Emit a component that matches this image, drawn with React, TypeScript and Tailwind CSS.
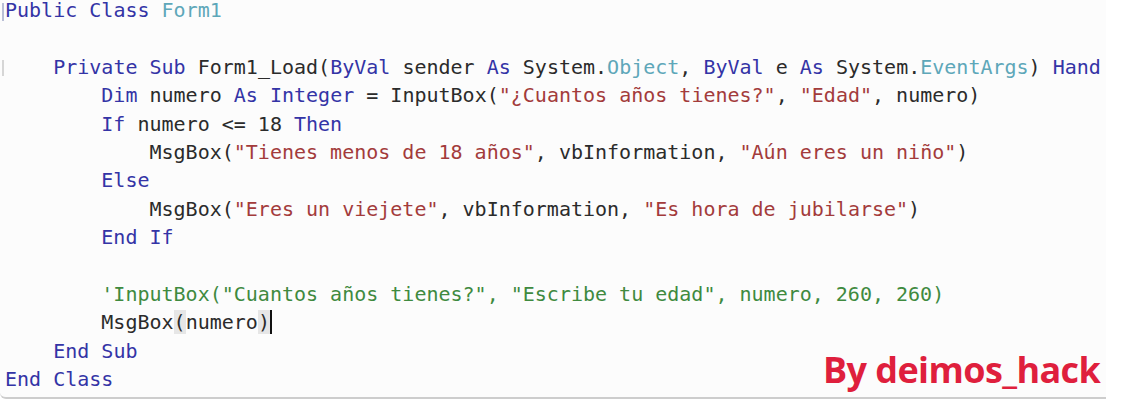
import React from 'react';

type Kind = 'kw' | 'ty' | 'st' | 'cm' | 'tx';
type Token = [string, Kind];

/* colour for each token kind, roughly the old VS palette after jpeg */
const COLORS: Record<Kind, string> = {
  kw: 'text-[#3434a6]',
  ty: 'text-[#5ea7b9]',
  st: 'text-[#a33b3b]',
  cm: 'text-[#3f8a3f]',
  tx: 'text-[#2b2b2b]',
};

const LINES: Token[][] = [
  [['Public', 'kw'], [' ', 'tx'], ['Class', 'kw'], [' ', 'tx'], ['Form1', 'ty']],
  [],
  [
    ['    ', 'tx'], ['Private', 'kw'], [' ', 'tx'], ['Sub', 'kw'], [' Form1_Load(', 'tx'],
    ['ByVal', 'kw'], [' sender ', 'tx'], ['As', 'kw'], [' System.', 'tx'], ['Object', 'ty'],
    [', ', 'tx'], ['ByVal', 'kw'], [' e ', 'tx'], ['As', 'kw'], [' System.', 'tx'],
    ['EventArgs', 'ty'], [') ', 'tx'], ['Hand', 'kw'],
  ],
  [
    ['        ', 'tx'], ['Dim', 'kw'], [' numero ', 'tx'], ['As', 'kw'], [' ', 'tx'], ['Integer', 'kw'],
    [' = InputBox(', 'tx'], ['"¿Cuantos años tienes?"', 'st'], [', ', 'tx'], ['"Edad"', 'st'], [', numero)', 'tx'],
  ],
  [['        ', 'tx'], ['If', 'kw'], [' numero <= 18 ', 'tx'], ['Then', 'kw']],
  [
    ['            MsgBox(', 'tx'], ['"Tienes menos de 18 años"', 'st'], [', vbInformation, ', 'tx'],
    ['"Aún eres un niño"', 'st'], [')', 'tx'],
  ],
  [['        ', 'tx'], ['Else', 'kw']],
  [
    ['            MsgBox(', 'tx'], ['"Eres un viejete"', 'st'], [', vbInformation, ', 'tx'],
    ['"Es hora de jubilarse"', 'st'], [')', 'tx'],
  ],
  [['        ', 'tx'], ['End If', 'kw']],
  [],
  [['        ', 'tx'], ['\'InputBox("Cuantos años tienes?", "Escribe tu edad", numero, 260, 260)', 'cm']],
  [], // MsgBox(numero) drawn by hand below, it has the caret
  [['    ', 'tx'], ['End Sub', 'kw']],
  [['End Class', 'kw']],
];

export default function App() {
  return (
    <div className="relative w-[1125px] h-[403px] bg-white overflow-hidden">
      {/* ── Editor surface ── */}
      <div className="relative w-[1106px] h-[399px] bg-[#fcfcfc] border-b-2 border-[#cdcdcd] rounded-bl-[6px] overflow-hidden">
        <div
          className="flex flex-col pl-[5px] text-[20px] leading-[28.4px] whitespace-pre"
          style={{ fontFamily: '"DejaVu Sans Mono", "Liberation Mono", monospace' }}
        >
          {LINES.map((line, i) =>
            i === 11 ? (
              <div key={i} className="h-[28.4px] text-[#2b2b2b]">
                {'        MsgBox'}
                <span className="bg-[#e6e6e6]">(</span>
                numero
                <span className="bg-[#e6e6e6]">)</span>
                <span className="inline-block w-[2px] h-[24px] align-[-5px] bg-[#111]" />
              </div>
            ) : (
              <div key={i} className={i === 0 ? 'h-[24.4px] leading-[20px]' : 'h-[28.4px]'}>
                {line.map(([text, kind], j) => (
                  <span key={j} className={COLORS[kind]}>
                    {text}
                  </span>
                ))}
              </div>
            )
          )}
        </div>

        {/* margin marks on the left gutter */}
        <span className="absolute left-[2px] top-[3px] w-[2px] h-[18px] bg-[#b9bfd6]" />
        <span className="absolute left-[2px] top-[60px] w-[2px] h-[16px] bg-[#d6d6d6]" />
      </div>

      {/* ── Watermark ── */}
      <div
        className="absolute left-[823px] top-[352px] text-[36px] leading-none font-bold text-[#df1f3d] tracking-[-0.6px]"
        style={{ fontFamily: '"Open Sans", "Liberation Sans", sans-serif' }}
      >
        By deimos_hack
      </div>
    </div>
  );
}
